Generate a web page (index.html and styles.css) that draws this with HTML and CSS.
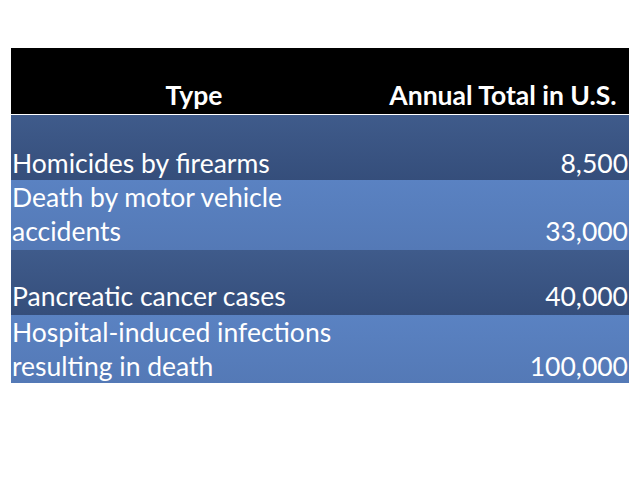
FILE: index.html
```html
<!DOCTYPE html>
<html>
<head>
<meta charset="utf-8">
<link rel="stylesheet" href="styles.css">
</head>
<body>
<div class="slide">
  <div class="table">
    <div class="row head">
      <div class="cell c1">Type</div>
      <div class="cell c2">Annual Total in U.S.</div>
    </div>
    <div class="row dark r1">
      <div class="cell c1">Homicides by firearms</div>
      <div class="cell c2">8,500</div>
    </div>
    <div class="row light r2">
      <div class="cell c1">Death by motor vehicle accidents</div>
      <div class="cell c2">33,000</div>
    </div>
    <div class="row dark r3">
      <div class="cell c1">Pancreatic cancer cases</div>
      <div class="cell c2">40,000</div>
    </div>
    <div class="row light r4">
      <div class="cell c1">Hospital-induced infections resulting in death</div>
      <div class="cell c2">100,000</div>
    </div>
  </div>
</div>
</body>
</html>
```

FILE: styles.css
```css
html, body {
  margin: 0;
  padding: 0;
  background: #ffffff;
}
.slide {
  width: 640px;
  height: 480px;
  padding-top: 48px;
  padding-left: 11px;
  box-sizing: border-box;
}
.table {
  width: 618px;
  font-family: "Lato", "Open Sans", sans-serif;
  font-size: 26.5px;
  color: #ffffff;
}
.row {
  display: grid;
  grid-template-columns: 366px 252px;
  align-items: end;
  line-height: 33.3px;
  box-sizing: border-box;
}
.cell {
  padding: 0 1px;
}
.c2 {
  text-align: right;
}
.head {
  background: #000000;
  height: 67px;
  border-bottom: 1px solid #ffffff;
  font-weight: bold;
  padding-bottom: 2px;
}
.head .c1,
.head .c2 {
  text-align: center;
}
.dark {
  background: linear-gradient(#3f5b8b, #354e7b);
}
.light {
  background: linear-gradient(#5a82c2, #5479b6);
}
.r1 { height: 65px; padding-bottom: 0; }
.r2 { height: 70px; padding-bottom: 2px; }
.r3 { height: 65px; padding-bottom: 2px; }
.r4 { height: 68px; padding-bottom: 0; }
```
